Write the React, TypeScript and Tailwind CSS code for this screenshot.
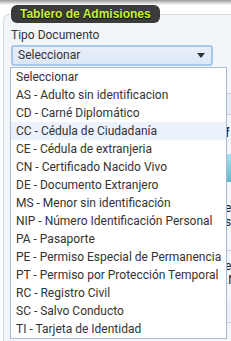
import React from 'react';

const opciones = [
  'Seleccionar',
  'AS - Adulto sin identificacion',
  'CD - Carné Diplomático',
  'CC - Cédula de Ciudadanía',
  'CE - Cédula de extranjeria',
  'CN - Certificado Nacido Vivo',
  'DE - Documento Extranjero',
  'MS - Menor sin identificación',
  'NIP - Número Identificación Personal',
  'PA - Pasaporte',
  'PE - Permiso Especial de Permanencia',
  'PT - Permiso por Protección Temporal',
  'RC - Registro Civil',
  'SC - Salvo Conducto',
  'TI - Tarjeta de Identidad',
];

export default function App() {
  const activo = 'CC - Cédula de Ciudadanía';

  return (
    <div className="relative w-[231px] h-[341px] overflow-hidden bg-white font-['Roboto',sans-serif] text-[12px] text-[#333]">
      <div className="h-[5px] bg-gradient-to-b from-[#9a9a9a] to-white" />

      <fieldset className="ml-[3px] w-[260px] h-[400px] border border-[#d6dadf] rounded-tl-[6px] bg-[#f3f6f8] pl-[7px]">
        <legend className="h-[18px] px-[9px] rounded-[6px] bg-[#3b3b3b] font-['Liberation_Sans',sans-serif] font-bold text-[12px] leading-[18px] text-[#c9f23e] [text-shadow:0_1px_1px_#000]">
          Tablero de Admisiones
        </legend>

        <div className="mt-[5px] leading-[14px]">Tipo Documento</div>

        <div className="mt-[3px] w-[202px] h-[21px] flex items-center justify-between pl-[5px] pr-[6px] border-2 border-[#a8c7ef] rounded-[3px] bg-gradient-to-b from-[#e9f0fa] to-[#dbe6f6]">
          <span className="leading-[15px]">Seleccionar</span>
          <span className="w-0 h-0 border-l-[4px] border-r-[4px] border-t-[5px] border-l-transparent border-r-transparent border-t-[#333]" />
        </div>

        {/* lo que queda detras de la lista */}
        <div className="flex mt-[6px]">
          <div className="w-[210px] shrink-0" />
          <div className="w-[40px] shrink-0 pl-[4px]">
            <div className="mt-[21px] h-[22px] border-y border-[#c8ced6] bg-[#e6edf5]" />
            <div className="mt-[11px] font-bold text-[#222] leading-[14px]">f</div>
            <div className="mt-[14px] h-[28px] bg-gradient-to-b from-[#a8e2ee] to-[#62b9c9]" />
            <div className="mt-[19px] leading-[14px] text-[#222]">e</div>
            <div className="leading-[14px] text-[#222]">s</div>
            <div className="mt-[21px] border-t border-[#c8ced6] pt-[8px] leading-[14px] text-[#222]">e</div>
            <div className="leading-[14px] text-[#222]">.N</div>
            <div className="mt-[14px] h-[22px] border-b border-[#c8ced6] bg-[#eef2f8]" />
          </div>
        </div>
      </fieldset>

      <ul className="absolute left-[10px] top-[67px] w-[217px] border border-[#a6bbd8] bg-white">
        {opciones.map(o => (
          <li
            key={o}
            className={`h-[18px] leading-[18px] pl-[5px] whitespace-nowrap ${o === activo ? 'bg-[#ecf2fb]' : ''}`}
          >
            {o}
          </li>
        ))}
      </ul>
    </div>
  );
}
